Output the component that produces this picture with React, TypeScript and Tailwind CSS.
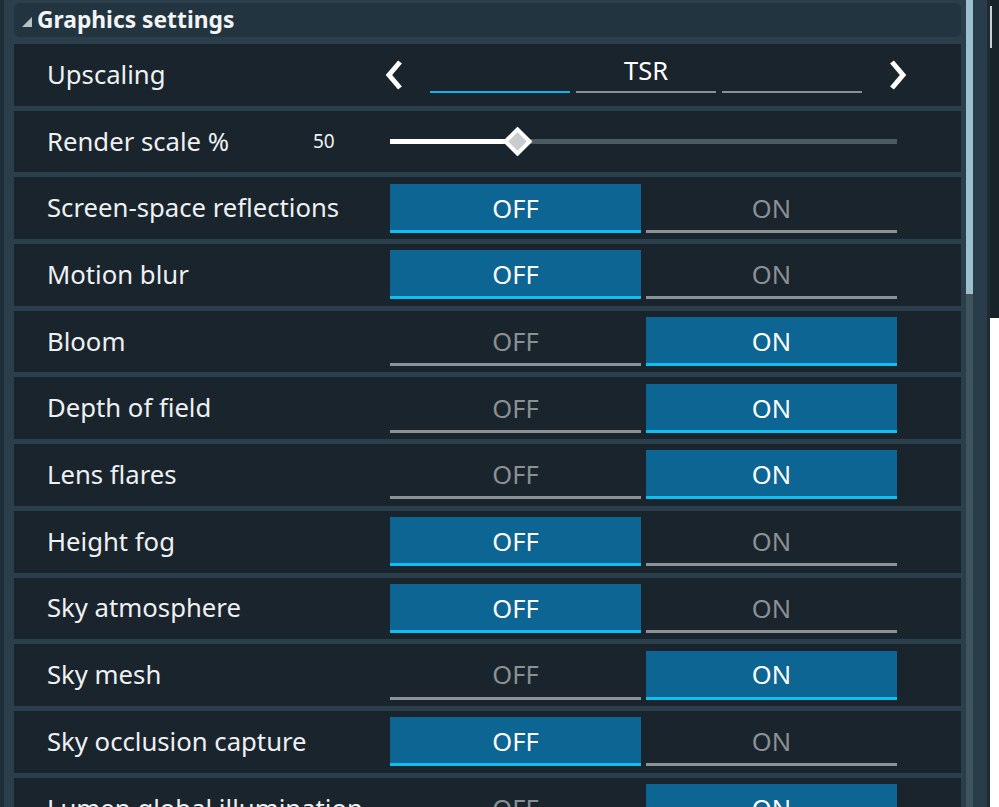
import React from "react";

type Toggle = { label: string; on: boolean };

const toggles: Toggle[] = [
  { label: "Screen-space reflections", on: false },
  { label: "Motion blur", on: false },
  { label: "Bloom", on: true },
  { label: "Depth of field", on: true },
  { label: "Lens flares", on: true },
  { label: "Height fog", on: false },
  { label: "Sky atmosphere", on: false },
  { label: "Sky mesh", on: true },
  { label: "Sky occlusion capture", on: false },
  { label: "Lumen global illumination", on: true },
];

const font = { fontFamily: '"Noto Sans", "Open Sans", sans-serif' };

function Row({ label, children, labelWidth = "w-[376px]" }: { label: string; children?: React.ReactNode; labelWidth?: string }) {
  return (
    <div className="flex h-[61.7px] shrink-0 items-center bg-[#1a242c]">
      <div className={`${labelWidth} shrink-0 pl-[33px] text-[25.7px] leading-none text-[#eef1f3]`}>{label}</div>
      {children}
    </div>
  );
}

function Seg({ text, active }: { text: string; active: boolean }) {
  return (
    <div
      className={
        active
          ? "flex h-[49px] w-[251px] items-center justify-center border-b-[3px] border-[#0ec0f2] bg-[#0c6592] pt-[2px] text-[25.5px] text-white"
          : "flex h-[49px] w-[251px] items-center justify-center border-b-[3px] border-[#8c9398] pt-[2px] text-[25.5px] text-[#8a9094]"
      }
    >
      {text}
    </div>
  );
}

function Chevron({ dir }: { dir: "left" | "right" }) {
  return (
    <svg width="18" height="32" viewBox="0 0 18 32" className="shrink-0">
      <path
        d={dir === "left" ? "M15 3 L4 16 L15 29" : "M3 3 L14 16 L3 29"}
        fill="none"
        stroke="#ffffff"
        strokeWidth="5"
        strokeLinejoin="miter"
      />
    </svg>
  );
}

export default function App() {
  return (
    <div className="flex h-[807px] w-[999px] overflow-hidden bg-[#2a3f4b]" style={font}>
      <div className="w-[4px] shrink-0 bg-[#1f2f39]" />
      <div className="flex w-[957px] shrink-0 flex-col gap-[5px] pl-[10px] pt-[3px]">
        <div className="flex h-[34px] shrink-0 items-center rounded-md bg-[#213440]">
          <svg width="12" height="12" viewBox="0 0 12 12" className="ml-[7px] mr-[4px] mt-[3px]">
            <polygon points="11,1 11,11 1,11" fill="#b9c0c5" />
          </svg>
          <span className="text-[22.8px] font-bold leading-none text-[#f2f4f5]">Graphics settings</span>
        </div>
        <div className="mt-[2px] flex flex-col gap-[5px]">
          <Row label="Upscaling" labelWidth="w-[371px]">
            <div className="flex items-center">
              <Chevron dir="left" />
              <div className="ml-[27px] flex flex-col items-center">
                <div className="h-[30px] pt-[1px] text-[25.5px] leading-none text-white">TSR</div>
                <div className="mt-[4px] flex gap-[6px]">
                  <div className="h-[2px] w-[140px] bg-[#0ab4f0]" />
                  <div className="h-[2px] w-[140px] bg-[#8a9196]" />
                  <div className="h-[2px] w-[140px] bg-[#8a9196]" />
                </div>
              </div>
              <div className="ml-[27px]">
                <Chevron dir="right" />
              </div>
            </div>
          </Row>
          <div className="flex h-[61.7px] shrink-0 items-center bg-[#1a242c]">
            <div className="w-[299px] shrink-0 pl-[33px] text-[25.7px] leading-none text-[#eef1f3]">Render scale %</div>
            <div className="w-[77px] shrink-0 text-[19px] leading-none text-[#eef1f3]">50</div>
            <div className="relative flex h-[32px] w-[507px] items-center">
              <div className="h-[5px] w-[120px] bg-white" />
              <div className="h-[5px] flex-1 bg-[#4c5a61]" />
              <div className="absolute left-[117px] top-[5px] h-[21px] w-[21px] rotate-45 border-[4px] border-white bg-[#c9ccce]" />
            </div>
          </div>
          {toggles.map((t) => (
            <Row key={t.label} label={t.label}>
              <div className="flex gap-[5px]">
                <Seg text="OFF" active={!t.on} />
                <Seg text="ON" active={t.on} />
              </div>
            </Row>
          ))}
        </div>
      </div>
      <div className="ml-[5px] flex w-[7px] shrink-0 flex-col">
        <div className="h-[294px] bg-[#9cbfcd]" />
        <div className="flex-1 bg-[#3e535c]" />
      </div>
      <div className="w-[14px] shrink-0 bg-[#283d49]" />
      <div className="w-[3px] shrink-0 bg-[#1d2b33]" />
      <div className="flex w-[9px] shrink-0 flex-col">
        <div className="relative h-[318px] bg-[#182329]">
          <div className="absolute left-[0px] top-[6px] h-[42px] w-[2px] bg-[#c8d0d4]" />
        </div>
        <div className="flex-1 bg-white" />
      </div>
    </div>
  );
}
